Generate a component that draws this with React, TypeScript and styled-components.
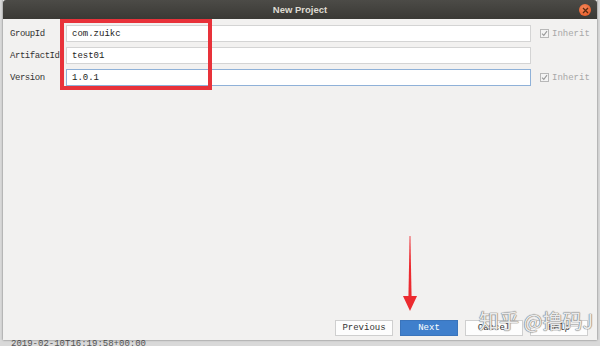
import styled, { createGlobalStyle } from "styled-components";

const GlobalStyle = createGlobalStyle`
  html, body {
    margin: 0;
    padding: 0;
    background: #d9d9d9;
  }
  #root {
    width: 600px;
    height: 346px;
    overflow: hidden;
  }
`;

interface FieldRow {
  label: string;
  value: string;
  focused?: boolean;
  inherit?: boolean;
}

const rows: FieldRow[] = [
  { label: "GroupId", value: "com.zuikc", inherit: true },
  { label: "ArtifactId", value: "test01" },
  { label: "Version", value: "1.0.1", focused: true, inherit: true },
];

const buttons = ["Previous", "Next", "Cancel", "Help"];

const CheckIcon = () => (
  <svg width="9" height="9" viewBox="0 0 9 9">
    <rect x="0.5" y="0.5" width="8" height="8" fill="#f4f4f4" stroke="#b8b8b8" />
    <path d="M2 4.6 L3.8 6.4 L7 2.2" fill="none" stroke="#9a9a9a" strokeWidth="1.1" />
  </svg>
);

const Arrow = () => (
  <svg width="20" height="76" viewBox="0 0 20 76">
    <path d="M9.6 0 L10.4 0 L11.6 62 L8.4 62 Z" fill="#ec2b30" />
    <path d="M3 60 L17 60 L10 75 Z" fill="#ec2b30" />
  </svg>
);

const App = () => {
  return (
    <>
      <GlobalStyle />
      <Page>
        <Dialog>
          <TitleBar>
            <Title>New Project</Title>
            <CloseButton>
              <svg width="7" height="7" viewBox="0 0 7 7">
                <path d="M1 1 L6 6 M6 1 L1 6" stroke="#5a2a10" strokeWidth="1.3" />
              </svg>
            </CloseButton>
          </TitleBar>

          <Body>
            <Form>
              {rows.map((row) => (
                <Row key={row.label}>
                  <Label>{row.label}</Label>
                  <Input $focused={row.focused}>{row.value}</Input>
                  {row.inherit ? (
                    <Inherit>
                      <CheckIcon />
                      Inherit
                    </Inherit>
                  ) : (
                    <span />
                  )}
                </Row>
              ))}
            </Form>

            <ButtonBar>
              {buttons.map((b) => (
                <Button key={b} $primary={b === "Next"}>
                  {b}
                </Button>
              ))}
            </ButtonBar>
          </Body>

          <Highlight />
          <ArrowMark>
            <Arrow />
          </ArrowMark>
          <Watermark>知乎 @撸码J</Watermark>
        </Dialog>
        <BackLine>2019-02-10T16:19:58+00:00</BackLine>
      </Page>
    </>
  );
};

export default App;

const Page = styled.div`
  display: flex;
  flex-direction: column;
  width: 600px;
  height: 346px;
  padding: 0 3px;
  box-sizing: border-box;
`;

const Dialog = styled.div`
  position: relative;
  display: flex;
  flex-direction: column;
  height: 340px;
  background: #f2f1f0;
  box-shadow: 0 0 2px rgba(0, 0, 0, 0.5);
`;

const TitleBar = styled.div`
  position: relative;
  display: flex;
  align-items: center;
  justify-content: center;
  height: 19px;
  background: linear-gradient(#4c4b47, #3a3935);
  border-radius: 3px 3px 0 0;
`;

const Title = styled.div`
  font-family: "Liberation Sans", "DejaVu Sans", sans-serif;
  font-weight: bold;
  font-size: 9.5px;
  color: #dfdbd2;
`;

const CloseButton = styled.div`
  position: absolute;
  right: 6px;
  top: 4px;
  width: 12px;
  height: 12px;
  border-radius: 50%;
  background: radial-gradient(circle at 40% 35%, #f5875a, #e5531e);
  display: flex;
  align-items: center;
  justify-content: center;
`;

const Body = styled.div`
  flex: 1;
  display: flex;
  flex-direction: column;
  justify-content: space-between;
  padding: 6px 9px 4px 7px;
`;

const Form = styled.div`
  display: flex;
  flex-direction: column;
  gap: 5px;
`;

const Row = styled.div`
  display: grid;
  grid-template-columns: 56px 465px 1fr;
  align-items: center;
  height: 17px;
`;

const Label = styled.div`
  font-family: "Liberation Mono", monospace;
  font-size: 9px;
  letter-spacing: -0.45px;
  color: #333;
  white-space: nowrap;
`;

const Input = styled.div<{ $focused?: boolean }>`
  height: 17px;
  box-sizing: border-box;
  background: #fff;
  border: 1px solid ${(p) => (p.$focused ? "#8fb1d8" : "#d4d4d4")};
  padding: 0 5px;
  display: flex;
  align-items: center;
  font-family: "Liberation Mono", monospace;
  font-size: 9px;
  color: #222;
`;

const Inherit = styled.div`
  display: flex;
  align-items: center;
  gap: 3px;
  padding-left: 9px;
  font-family: "Liberation Mono", monospace;
  font-size: 9px;
  color: #a8a8a8;
`;

const ButtonBar = styled.div`
  display: flex;
  justify-content: flex-end;
  gap: 7px;
`;

const Button = styled.div<{ $primary?: boolean }>`
  width: 58px;
  height: 16px;
  box-sizing: border-box;
  display: flex;
  align-items: center;
  justify-content: center;
  font-family: "Liberation Mono", monospace;
  font-size: 9px;
  color: ${(p) => (p.$primary ? "#ffffff" : "#333")};
  background: ${(p) => (p.$primary ? "#3f7fcc" : "#fdfdfd")};
  border: 1px solid ${(p) => (p.$primary ? "#3a74bb" : "#cfcfcf")};
`;

const Highlight = styled.div`
  position: absolute;
  left: 57px;
  top: 19px;
  width: 152px;
  height: 71px;
  box-sizing: border-box;
  border: 4px solid #e8323a;
`;

const ArrowMark = styled.div`
  position: absolute;
  left: 397px;
  top: 236px;
  display: flex;
`;

const Watermark = styled.div`
  position: absolute;
  left: 476px;
  top: 308px;
  font-family: "Noto Sans CJK SC", sans-serif;
  font-size: 20px;
  line-height: 26px;
  color: rgba(255, 255, 255, 0.85);
  text-shadow: 0 0 1px #7a7a7a, 0 0 1px #7a7a7a, 0 0 1px #7a7a7a;
  white-space: nowrap;
`;

const BackLine = styled.div`
  height: 6px;
  overflow: hidden;
  padding-left: 8px;
  font-family: "Liberation Mono", monospace;
  font-size: 9px;
  line-height: 8px;
  color: #555;
`;
